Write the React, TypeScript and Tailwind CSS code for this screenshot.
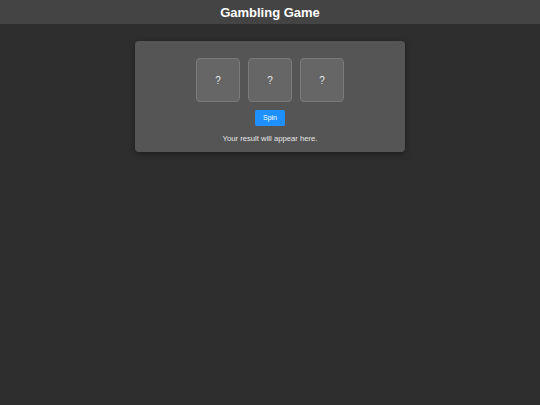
import React, { useState } from 'react';

const symbols = ['🍒', '🍋', '🔔', '⭐', '7'];

const App: React.FC = () => {
  const [reels, setReels] = useState<string[]>(['?', '?', '?']);
  const [result, setResult] = useState('Your result will appear here.');

  const spin = () => {
    const next = reels.map(() => symbols[Math.floor(Math.random() * symbols.length)]);
    setReels(next);
    setResult(next.every((s) => s === next[0]) ? 'Jackpot! You win!' : 'Try again!');
  };

  return (
    <div
      className="min-h-screen bg-[#2e2e2e] text-white"
      style={{ fontFamily: '"Liberation Sans", Arial, sans-serif' }}
    >
      <header className="h-[24px] bg-[#444444] flex items-center justify-center">
        <h1 className="text-[13px] font-bold leading-none">Gambling Game</h1>
      </header>

      <div className="flex justify-center pt-[17px]">
        <div className="w-[270px] h-[111px] bg-[#555555] rounded-[4px] shadow-[0_2px_6px_rgba(0,0,0,0.4)] flex flex-col items-center pt-[17px]">
          {/* Reels */}
          <div className="flex gap-[8px]">
            {reels.map((r, i) => (
              <div
                key={i}
                className="w-[44px] h-[44px] bg-[#666666] border border-[#7a7a7a] rounded-[4px] flex items-center justify-center text-[10px] text-[#e6e6e6]"
              >
                {r}
              </div>
            ))}
          </div>

          <button
            onClick={spin}
            className="mt-[8px] w-[30px] h-[16px] bg-[#1e90ff] rounded-[2px] text-[7px] text-white flex items-center justify-center"
          >
            Spin
          </button>

          <p className="mt-[9px] text-[7.7px] leading-none text-[#e6e6e6]">{result}</p>
        </div>
      </div>
    </div>
  );
};

export default App;
